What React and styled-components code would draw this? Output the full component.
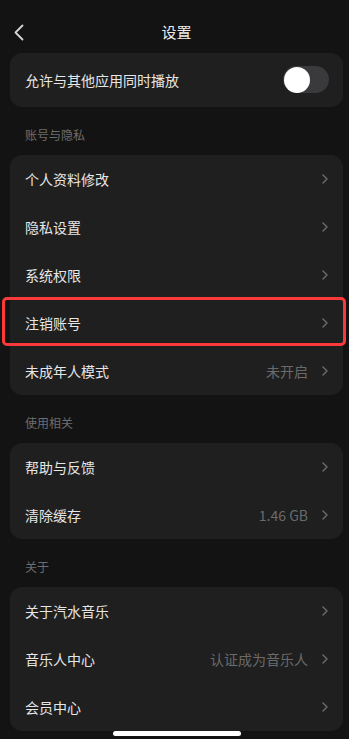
import React from "react";
import styled, { createGlobalStyle } from "styled-components";

const Global = createGlobalStyle`
  html, body { margin: 0; padding: 0; background: #131313; }
  body {
    width: 349px; height: 739px; overflow: hidden;
    font-family: "Noto Sans CJK SC", "Noto Sans", "Liberation Sans", sans-serif;
    -webkit-font-smoothing: antialiased;
  }
`;

const Page = styled.div`
  position: relative;
  width: 349px;
  height: 739px;
  overflow: hidden;
  background: #131313;
  padding: 0 6px 0 10px;
  box-sizing: border-box;
`;

const Header = styled.div`
  height: 53px;
  box-sizing: border-box;
  padding-top: 10px;
  display: grid;
  grid-template-columns: 1fr auto 1fr;
  align-items: center;
`;

const Back = styled.div`
  display: flex;
  align-items: center;
  padding-left: 4px;
  padding-top: 2px;
  height: 42px;
  box-sizing: border-box;
`;

const Title = styled.div`
  color: #ececec;
  font-size: 15px;
  font-weight: 400;
  line-height: 42px;
`;

const Card = styled.div`
  background: #1f1f1f;
  border-radius: 12px;
`;

const Row = styled.div`
  position: relative;
  height: ${(p) => (p.$tall ? 54 : 48)}px;
  display: flex;
  align-items: center;
  padding: 0 ${(p) => (p.$tall ? 14 : 15)}px 1px 15px;
  box-sizing: border-box;
  ${(p) =>
    p.$highlight &&
    `
    &::after {
      content: "";
      position: absolute;
      top: -2px;
      bottom: 1px;
      left: -8px;
      right: -3px;
      border: 3px solid #fa3a3a;
      border-radius: 5px;
      pointer-events: none;
    }
  `}
`;

const Label = styled.div`
  flex: 1;
  color: #e6e6e6;
  font-size: 14px;
  line-height: 20px;
  white-space: nowrap;
`;

const Value = styled.div`
  color: #6a6a6a;
  font-size: 14px;
  line-height: 20px;
  margin-right: 14px;
  white-space: nowrap;
`;

const SectionTitle = styled.div`
  color: #6d6d6d;
  font-size: 12px;
  line-height: 14px;
  padding: 21px 0 13px 15px;
`;

const Toggle = styled.div`
  width: 46px;
  height: 27px;
  border-radius: 14px;
  background: #3a3a3c;
  display: flex;
  align-items: center;
  padding: 0 1px;
  box-sizing: border-box;
`;

const Knob = styled.div`
  width: 26px;
  height: 26px;
  border-radius: 50%;
  background: #ffffff;
`;

const HomeBar = styled.div`
  position: absolute;
  left: 113px;
  bottom: 3px;
  width: 128px;
  height: 5px;
  border-radius: 3px;
  background: #ffffff;
`;

const Chevron = () => (
  <svg width="6" height="10" viewBox="0 0 6 10" fill="none">
    <path d="M1 1 L5 5 L1 9" stroke="#6c6c6c" strokeWidth="1.4" strokeLinecap="round" strokeLinejoin="round" />
  </svg>
);

const BackIcon = () => (
  <svg width="10" height="17" viewBox="0 0 10 17" fill="none">
    <path d="M8.5 1.5 L1.5 8.5 L8.5 15.5" stroke="#d4d4d4" strokeWidth="1.8" strokeLinecap="round" strokeLinejoin="round" />
  </svg>
);

const Item = ({ label, value, highlight }) => (
  <Row $highlight={highlight}>
    <Label>{label}</Label>
    {value && <Value>{value}</Value>}
    <Chevron />
  </Row>
);

const sections = [
  {
    title: "账号与隐私",
    items: [
      { label: "个人资料修改" },
      { label: "隐私设置" },
      { label: "系统权限" },
      { label: "注销账号", highlight: true },
      { label: "未成年人模式", value: "未开启" },
    ],
  },
  {
    title: "使用相关",
    items: [{ label: "帮助与反馈" }, { label: "清除缓存", value: "1.46 GB" }],
  },
  {
    title: "关于",
    items: [
      { label: "关于汽水音乐" },
      { label: "音乐人中心", value: "认证成为音乐人" },
      { label: "会员中心" },
    ],
  },
];

export default function App() {
  return (
    <Page>
      <Global />
      <Header>
        <Back>
          <BackIcon />
        </Back>
        <Title>设置</Title>
        <div />
      </Header>
      <Card>
        <Row $tall>
          <Label>允许与其他应用同时播放</Label>
          <Toggle>
            <Knob />
          </Toggle>
        </Row>
      </Card>
      {sections.map((s) => (
        <React.Fragment key={s.title}>
          <SectionTitle>{s.title}</SectionTitle>
          <Card>
            {s.items.map((it) => (
              <Item key={it.label} {...it} />
            ))}
          </Card>
        </React.Fragment>
      ))}
      <HomeBar />
    </Page>
  );
}
